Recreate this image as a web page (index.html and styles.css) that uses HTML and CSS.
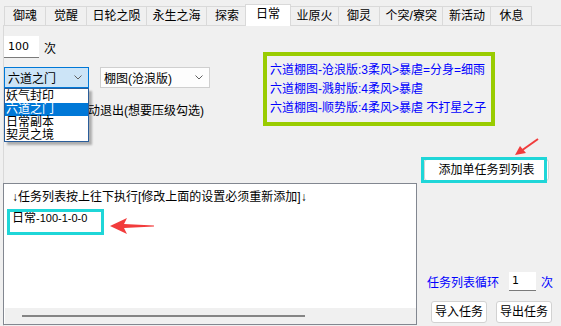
FILE: index.html
```html
<!DOCTYPE html>
<html>
<head>
<meta charset="utf-8">
<link rel="stylesheet" href="styles.css">
</head>
<body>
<div class="tabs">
  <div class="tab">御魂</div>
  <div class="tab">觉醒</div>
  <div class="tab">日轮之陨</div>
  <div class="tab">永生之海</div>
  <div class="tab">探索</div>
  <div class="tab active">日常</div>
  <div class="tab">业原火</div>
  <div class="tab">御灵</div>
  <div class="tab">个突/寮突</div>
  <div class="tab">新活动</div>
  <div class="tab">休息</div>
</div>
<div class="panel">
  <div class="top">
    <div class="left">
      <div class="row count">
        <div class="textbox tb-count">100</div>
        <span>次</span>
      </div>
      <div class="row combos">
        <div class="combo combo-focus">
          <span>六道之门</span>
          <svg class="chev" width="8" height="5" viewBox="0 0 8 5"><polyline points="0.5,0.5 4,4 7.5,0.5" fill="none" stroke="#606060" stroke-width="1"/></svg>
        </div>
        <div class="combo combo-plain">
          <span>棚图(沧浪版)</span>
          <svg class="chev" width="8" height="5" viewBox="0 0 8 5"><polyline points="0.5,0.5 4,4 7.5,0.5" fill="none" stroke="#606060" stroke-width="1"/></svg>
        </div>
      </div>
      <div class="row check">
        <span class="checkbox"></span>
        <span class="checklabel">动退出(想要压级勾选)</span>
      </div>
      <ul class="droplist">
        <li>妖气封印</li>
        <li class="selected">六道之门</li>
        <li>日常副本</li>
        <li>契灵之境</li>
      </ul>
    </div>
    <div class="notes">
      <div>六道棚图-沧浪版:3柔风&gt;暴虐=分身=细雨</div>
      <div>六道棚图-溅射版:4柔风&gt;暴虐</div>
      <div>六道棚图-顺势版:4柔风&gt;暴虐 不打星之子</div>
    </div>
  </div>
  <div class="addrow">
    <div class="btn btn-add">添加单任务到列表</div>
    <svg class="arrow-add" width="32" height="22" viewBox="0 0 32 22">
      <line x1="29" y1="2" x2="12" y2="14" stroke="#f03c3c" stroke-width="2"/>
      <polygon points="6,18 11,9 17,16" fill="#f03c3c"/>
    </svg>
  </div>
  <div class="bottom">
    <div class="listbox">
      <div class="listtext">
        <div>↓任务列表按上往下执行[修改上面的设置必须重新添加]↓</div>
        <div class="line2">日常<span class="num">-100-1-0-0</span></div>
      </div>
      <div class="hscroll"><div class="thumb"></div></div>
      <div class="mark-cyan"></div>
      <svg class="arrow-left" width="48" height="20" viewBox="0 0 48 20">
        <polygon points="2,10 19,2 16,8 46,9.5 46,10.5 16,12 19,18" fill="#f23c3c"/>
      </svg>
    </div>
    <div class="side">
      <div class="loop">
        <span class="blue">任务列表循环</span>
        <div class="textbox tb-loop">1</div>
        <span class="blue">次</span>
      </div>
      <div class="btnrow">
        <div class="btn btn-io">导入任务</div>
        <div class="btn btn-io">导出任务</div>
      </div>
    </div>
  </div>
</div>
</body>
</html>
```
FILE: styles.css
```css
html, body {
  margin: 0;
  padding: 0;
}
body {
  background: #f0f0f0;
  font-family: "Liberation Sans", "Noto Sans CJK SC", sans-serif;
  font-size: 12px;
  color: #000;
  width: 561px;
  height: 326px;
  overflow: hidden;
}

/* tabs */
.tabs {
  display: flex;
  align-items: flex-end;
  height: 25px;
  padding-left: 4px;
}
.tab {
  box-sizing: border-box;
  height: 19px;
  min-width: 42px;
  padding: 0 5.5px;
  margin-right: -1px;
  border: 1px solid #d9d9d9;
  border-bottom: none;
  background: #f0f0f0;
  text-align: center;
  line-height: 18px;
  white-space: nowrap;
}
.tab.active {
  position: relative;
  z-index: 2;
  height: 22px;
  min-width: 46px;
  margin: 0 -1px -1px -2px;
  background: #ffffff;
  line-height: 19px;
}

/* panel */
.panel {
  position: relative;
  margin-left: 3px;
  border-top: 1px solid #d9d9d9;
  border-left: 1px solid #d9d9d9;
  height: 300px;
}
.top {
  display: flex;
  height: 100px;
}
.left {
  position: relative;
  width: 259px;
  padding-top: 10px;
}
.row {
  display: flex;
  align-items: center;
}
.textbox {
  box-sizing: border-box;
  background: #fff;
  border-bottom: 1px solid #7a7a7a;
  font-family: "DejaVu Sans", sans-serif;
  font-size: 11px;
}
.tb-count {
  width: 35px;
  height: 22px;
  line-height: 21px;
  padding-left: 4px;
}
.count span {
  margin-left: 5px;
}
.combos {
  margin-top: 9px;
}
.combo {
  box-sizing: border-box;
  height: 21px;
  display: flex;
  align-items: center;
  justify-content: space-between;
  padding: 0 6px 0 3px;
}
.combo-focus {
  width: 85px;
  background: #cce4f7;
  border: 1px solid #0078d7;
}
.combo-plain {
  width: 110px;
  margin-left: 11px;
  background: #fdfdfd;
  border: 1px solid #cfcfcf;
}
.check {
  margin-top: 13px;
  height: 16px;
}
.checkbox {
  box-sizing: border-box;
  width: 13px;
  height: 13px;
  margin-left: 2px;
  background: #fff;
  border: 1px solid #333;
}
.checklabel {
  margin-left: 69px;
}
.droplist {
  position: absolute;
  left: 0;
  top: 62px;
  margin: 0;
  padding: 1px 0 0 0;
  list-style: none;
  box-sizing: border-box;
  width: 85px;
  height: 54px;
  background: #fff;
  border: 1px solid #2a5d9a;
  box-shadow: 3px 3px 2px rgba(0, 0, 0, 0.28);
  z-index: 3;
}
.droplist li {
  height: 13px;
  line-height: 13px;
  padding-left: 1px;
}
.droplist li.selected {
  background: #0078d7;
  color: #fff;
}
.notes {
  box-sizing: border-box;
  margin-top: 26px;
  width: 232px;
  height: 74px;
  border: 4px solid #99cc00;
  padding: 5px 0 0 3px;
  color: #0000ff;
  line-height: 19px;
  white-space: nowrap;
}

/* add button */
.addrow {
  position: relative;
  margin-top: 33px;
  padding-left: 420px;
  height: 22px;
}
.btn {
  box-sizing: border-box;
  background: #fff;
  border: 1px solid #d2d2d2;
  border-radius: 3px;
  text-align: center;
  white-space: nowrap;
}
.btn-add {
  position: relative;
  width: 125px;
  height: 22px;
  line-height: 20px;
}
.btn-add::after {
  content: "";
  position: absolute;
  left: -4px;
  top: -3px;
  width: 126px;
  height: 26px;
  box-sizing: border-box;
  border: 3px solid #1fd6d8;
}
.arrow-add {
  position: absolute;
  left: 505px;
  top: -22px;
}

/* bottom */
.bottom {
  display: flex;
  margin-top: 2px;
}
.listbox {
  position: relative;
  box-sizing: border-box;
  margin-left: -1px;
  width: 416px;
  height: 142px;
  background: #fff;
  border: 1px solid #828790;
  display: flex;
  flex-direction: column;
}
.listtext {
  flex: 1;
  padding: 3px 0 0 8px;
  line-height: 20px;
  white-space: nowrap;
}
.line2 {
  margin-top: 1px;
}
.num {
  font-size: 11px;
}
.hscroll {
  height: 16px;
  margin-left: 1px;
  background: #f0f0f0;
  display: flex;
  align-items: center;
}
.thumb {
  margin-left: 17px;
  width: 283px;
  height: 2px;
  background: #858585;
}
.mark-cyan {
  position: absolute;
  left: 3px;
  top: 25px;
  width: 97px;
  height: 26px;
  box-sizing: border-box;
  border: 3px solid #1fd6d8;
}
.arrow-left {
  position: absolute;
  left: 104px;
  top: 32px;
}
.side {
  padding-left: 10px;
}
.loop {
  display: flex;
  align-items: center;
  margin-top: 89px;
  height: 19px;
}
.blue {
  color: #0000ff;
}
.tb-loop {
  width: 27px;
  height: 19px;
  line-height: 18px;
  padding-left: 3px;
  margin: 0 5px 0 10px;
}
.btnrow {
  display: flex;
  margin-top: 10px;
  margin-left: 4px;
}
.btn-io {
  width: 56px;
  height: 22px;
  line-height: 20px;
  margin-right: 9px;
}
```
